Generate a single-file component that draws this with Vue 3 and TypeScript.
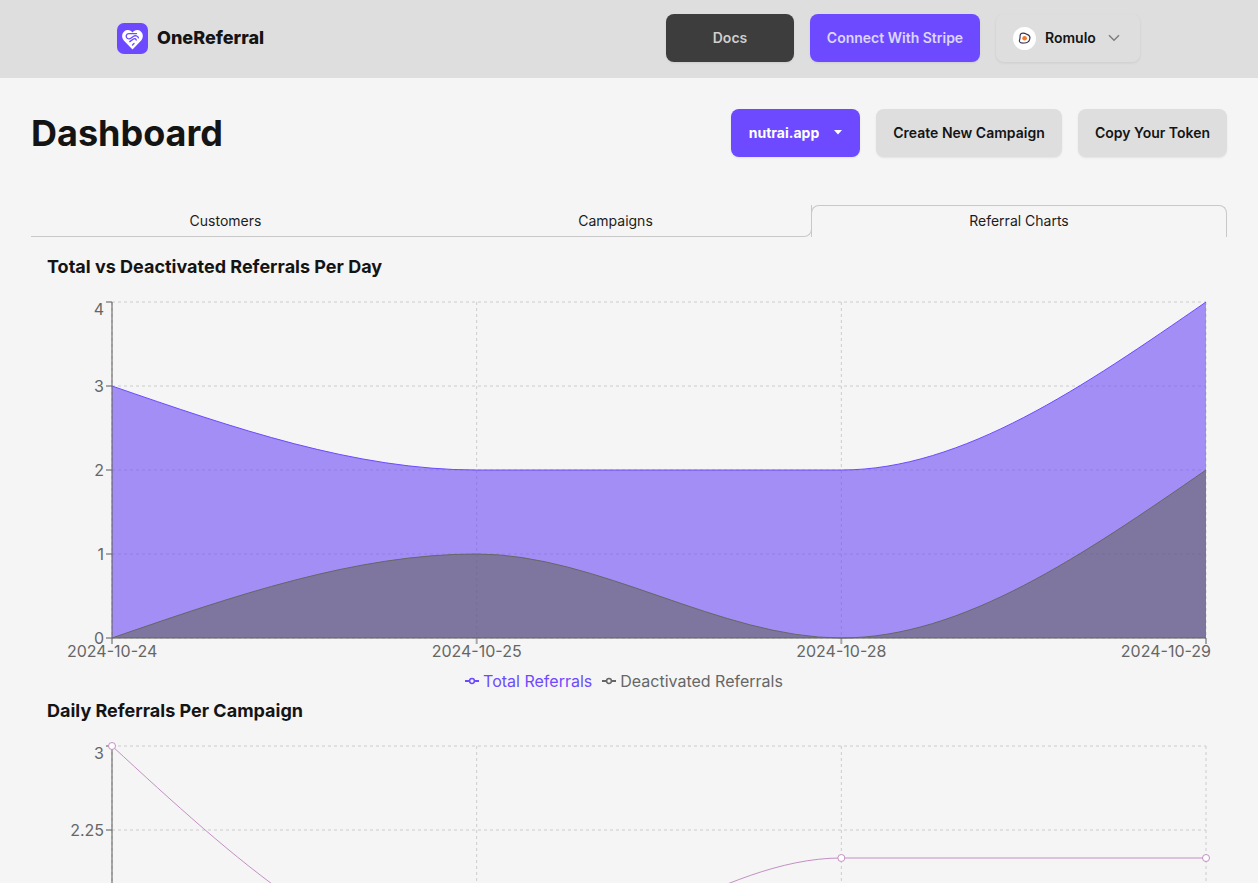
<script setup lang="ts">
type Pt = [number, number]

const xs = [112, 476.67, 841.33, 1206]
const xLabels = ['2024-10-24', '2024-10-25', '2024-10-28', '2024-10-29']

function monotone(pts: Pt[]): string {
  const n = pts.length
  const sign = (v: number) => (v < 0 ? -1 : 1)
  const slopes: number[] = new Array(n).fill(0)
  for (let i = 1; i < n - 1; i++) {
    const h0 = pts[i][0] - pts[i - 1][0]
    const h1 = pts[i + 1][0] - pts[i][0]
    const s0 = (pts[i][1] - pts[i - 1][1]) / h0
    const s1 = (pts[i + 1][1] - pts[i][1]) / h1
    const p = (s0 * h1 + s1 * h0) / (h0 + h1)
    slopes[i] = (sign(s0) + sign(s1)) * Math.min(Math.abs(s0), Math.abs(s1), 0.5 * Math.abs(p)) || 0
  }
  const edge = (a: Pt, b: Pt, t: number) => (3 * (b[1] - a[1]) / (b[0] - a[0]) - t) / 2
  slopes[0] = edge(pts[0], pts[1], slopes[1])
  slopes[n - 1] = edge(pts[n - 2], pts[n - 1], slopes[n - 2])
  let d = `M${pts[0][0]},${pts[0][1]}`
  for (let i = 0; i < n - 1; i++) {
    const dx = (pts[i + 1][0] - pts[i][0]) / 3
    d += `C${pts[i][0] + dx},${pts[i][1] + dx * slopes[i]},${pts[i + 1][0] - dx},${pts[i + 1][1] - dx * slopes[i + 1]},${pts[i + 1][0]},${pts[i + 1][1]}`
  }
  return d
}

const top1 = 302
const unit1 = 84
const bottom1 = top1 + 4 * unit1
const y1 = (v: number) => top1 + (4 - v) * unit1
const points = (vals: number[], y: (v: number) => number): Pt[] => vals.map((v, i) => [xs[i], y(v)])

const totalLine = monotone(points([3, 2, 2, 4], y1))
const deactLine = monotone(points([0, 1, 0, 2], y1))
const closeArea = (d: string) => `${d}L${xs[3]},${bottom1}L${xs[0]},${bottom1}Z`
const ticks1 = [4, 3, 2, 1, 0].map((v) => ({ label: String(v), y: y1(v), ty: v === 4 ? y1(v) + 13 : y1(v) + 6 }))

const top2 = 746
const unit2 = 112
const y2 = (v: number) => top2 + (3 - v) * unit2
const bottom2 = y2(0)
const campaignPts = points([3, 1, 2, 2], y2)
const campaignLine = monotone(campaignPts)
const ticks2 = [3, 2.25, 1.5, 0.75, 0].map((v) => ({ label: String(v), y: y2(v), ty: v === 3 ? y2(v) + 12.5 : y2(v) + 6 }))
</script>

<template>
  <div class="page">
    <header class="navbar">
      <div class="brand">
        <svg class="logo" viewBox="0 0 31 31" width="31" height="31" aria-hidden="true">
          <rect width="31" height="31" rx="7" fill="#6d4aff" />
          <path d="M15.5 26.5 L6.8 17.4 C3.4 13.6 5.6 7.2 10.6 7 C12.8 6.9 14.4 8 15.5 9.6 C16.6 8 18.2 6.9 20.4 7 C25.4 7.2 27.6 13.6 24.2 17.4 Z" fill="#fff" />
          <path d="M19.5 10.6 H12 C9.4 10.6 8.2 13.6 10.2 15.2 C11.4 16.1 13 15.9 14.2 15 L16.6 13.2 C18 12.2 21 12.8 21.4 14.8 M12.8 18.6 L16.4 16 C17.6 15.2 19 15.8 19.2 17 M15.5 22 L17 20.6" fill="none" stroke="#6d4aff" stroke-width="1.4" stroke-linecap="round" />
        </svg>
        <span class="brand-name">OneReferral</span>
      </div>
      <nav class="nav-actions">
        <button class="btn btn-dark" type="button">Docs</button>
        <button class="btn btn-stripe" type="button">Connect With Stripe</button>
        <button class="user" type="button">
          <span class="avatar">
            <svg viewBox="0 0 23 23" width="23" height="23" aria-hidden="true">
              <path d="M8.2 6.6 C10.4 5.2 12.6 6.6 14.2 7.4 C16.4 8.4 17.4 10.4 16.6 12.6 C15.8 15 13.6 16 11.4 16 C9.6 16 7.6 16.4 6.6 14.8 C5.8 13.4 7.2 12.2 7 10.6 C6.9 9.2 7 7.4 8.2 6.6 Z" fill="#fff" stroke="#3b3350" stroke-width="1.2" />
              <circle cx="11.6" cy="11.2" r="2.3" fill="#f0792b" />
            </svg>
          </span>
          <span class="user-name">Romulo</span>
          <svg class="chev" viewBox="0 0 12 8" width="12" height="8" aria-hidden="true">
            <path d="M1 1.2 L6 6.2 L11 1.2" fill="none" stroke="#7d7d7d" stroke-width="1.5" />
          </svg>
        </button>
      </nav>
    </header>

    <main class="content">
      <div class="title-row">
        <h1>Dashboard</h1>
        <div class="title-actions">
          <button class="btn btn-site" type="button">
            nutrai.app
            <svg viewBox="0 0 8 5" width="8" height="5" aria-hidden="true"><path d="M0 0 H8 L4 4.5 Z" fill="#fff" /></svg>
          </button>
          <button class="btn btn-light btn-create" type="button">Create New Campaign</button>
          <button class="btn btn-light btn-copy" type="button">Copy Your Token</button>
        </div>
      </div>

      <div class="tabs">
        <a class="tab">Customers</a>
        <a class="tab tab-before">Campaigns</a>
        <a class="tab tab-active">Referral Charts</a>
      </div>
    </main>

    <section class="chart">
      <h2 class="chart-title first">Total vs Deactivated Referrals Per Day</h2>
      <svg class="plot" viewBox="30 291 1188 374" width="1188" height="374">
        <g class="grid">
          <line v-for="t in ticks1" :key="t.label" :x1="xs[0]" :x2="xs[3]" :y1="t.y" :y2="t.y" />
          <line v-for="x in xs" :key="x" :x1="x" :x2="x" :y1="top1" :y2="bottom1" />
        </g>
        <path :d="closeArea(totalLine)" fill="#6d4af6" fill-opacity="0.6" />
        <path :d="totalLine" fill="none" stroke="#6d4aff" />
        <path :d="closeArea(deactLine)" fill="#666" fill-opacity="0.6" />
        <path :d="deactLine" fill="none" stroke="#666" />
        <g class="axis">
          <line :x1="xs[0]" :x2="xs[0]" :y1="top1" :y2="bottom1" />
          <line :x1="xs[0]" :x2="xs[3]" :y1="bottom1" :y2="bottom1" />
          <line v-for="t in ticks1" :key="t.label" :x1="xs[0] - 6" :x2="xs[0]" :y1="t.y" :y2="t.y" />
          <line v-for="x in xs" :key="x" :x1="x" :x2="x" :y1="bottom1" :y2="bottom1 + 6" />
        </g>
        <g class="labels">
          <text v-for="t in ticks1" :key="t.label" :x="xs[0] - 8" :y="t.ty" text-anchor="end">{{ t.label }}</text>
          <text :x="67" :y="bottom1 + 19">{{ xLabels[0] }}</text>
          <text :x="xs[1]" :y="bottom1 + 19" text-anchor="middle">{{ xLabels[1] }}</text>
          <text :x="xs[2]" :y="bottom1 + 19" text-anchor="middle">{{ xLabels[2] }}</text>
          <text :x="1211" :y="bottom1 + 19" text-anchor="end">{{ xLabels[3] }}</text>
        </g>
      </svg>
      <ul class="legend">
        <li class="legend-total">
          <svg viewBox="0 0 14 8" width="14" height="8" aria-hidden="true"><line x1="0" x2="14" y1="4" y2="4" stroke="currentColor" stroke-width="2" /><circle cx="7" cy="4" r="2.4" fill="#f5f5f5" stroke="currentColor" stroke-width="1.5" /></svg>
          Total Referrals
        </li>
        <li class="legend-deact">
          <svg viewBox="0 0 14 8" width="14" height="8" aria-hidden="true"><line x1="0" x2="14" y1="4" y2="4" stroke="currentColor" stroke-width="2" /><circle cx="7" cy="4" r="2.4" fill="#f5f5f5" stroke="currentColor" stroke-width="1.5" /></svg>
          Deactivated Referrals
        </li>
      </ul>

      <h2 class="chart-title second">Daily Referrals Per Campaign</h2>
      <svg class="plot" viewBox="30 735 1188 374" width="1188" height="374">
        <g class="grid">
          <line v-for="t in ticks2" :key="t.label" :x1="xs[0]" :x2="xs[3]" :y1="t.y" :y2="t.y" />
          <line v-for="x in xs" :key="x" :x1="x" :x2="x" :y1="top2" :y2="bottom2" />
        </g>
        <g class="axis">
          <line :x1="xs[0]" :x2="xs[0]" :y1="top2" :y2="bottom2" />
          <line :x1="xs[0]" :x2="xs[3]" :y1="bottom2" :y2="bottom2" />
          <line v-for="t in ticks2" :key="t.label" :x1="xs[0] - 6" :x2="xs[0]" :y1="t.y" :y2="t.y" />
        </g>
        <path :d="campaignLine" fill="none" stroke="#c48fc4" />
        <circle v-for="p in campaignPts" :key="p[0]" :cx="p[0]" :cy="p[1]" r="3.5" fill="#fff" stroke="#c48fc4" />
        <g class="labels">
          <text v-for="t in ticks2" :key="t.label" :x="xs[0] - 8" :y="t.ty" text-anchor="end">{{ t.label }}</text>
        </g>
      </svg>
    </section>
  </div>
</template>

<style>
html,
body {
  margin: 0;
  overflow: hidden;
  background: #f5f5f5;
}
</style>

<style scoped>
.page {
  height: 100vh;
  overflow: hidden;
  background: #f5f5f5;
  color: #141414;
  font-family: Inter, "Liberation Sans", sans-serif;
}

.navbar {
  height: 78px;
  box-sizing: border-box;
  padding: 0 118px 2px 117px;
  background: #dedede;
  display: flex;
  align-items: center;
  justify-content: space-between;
}

.brand {
  display: flex;
  align-items: center;
  gap: 9px;
}

.logo {
  display: block;
}

.brand-name {
  padding-bottom: 2px;
  font-size: 18px;
  font-weight: 800;
  color: #141414;
}

.nav-actions,
.title-actions {
  display: flex;
  align-items: center;
  gap: 16px;
}

.btn {
  height: 48px;
  box-sizing: border-box;
  padding: 0 0 1px;
  border: none;
  border-radius: 8px;
  font-family: inherit;
  font-size: 14px;
  font-weight: 600;
  display: flex;
  align-items: center;
  justify-content: center;
  box-shadow: 0 1px 2px rgba(0, 0, 0, 0.08);
}

.btn-dark {
  width: 128px;
  background: #3d3d3d;
  color: #cfcfcf;
}

.btn-stripe {
  width: 170px;
  background: #6d4aff;
  color: #dcd6ff;
}

.user {
  width: 144px;
  height: 48px;
  box-sizing: border-box;
  padding: 0 17px;
  border: none;
  border-radius: 8px;
  background: #dedede;
  box-shadow: 0 1px 3px rgba(0, 0, 0, 0.08);
  display: flex;
  align-items: center;
  font-family: inherit;
  font-size: 14px;
  font-weight: 600;
  color: #141414;
}

.avatar {
  width: 23px;
  height: 23px;
  border-radius: 50%;
  background: #fff;
  display: block;
  overflow: hidden;
}

.avatar svg {
  display: block;
}

.user-name {
  margin-left: 9px;
  padding-bottom: 2px;
}

.chev {
  margin-left: 12px;
}

.content {
  padding: 31px 31px 0;
}

.title-row {
  display: flex;
  align-items: center;
  justify-content: space-between;
  height: 48px;
}

h1 {
  margin: 0;
  font-size: 36px;
  font-weight: 700;
  color: #141414;
}

.btn-site {
  width: 129px;
  background: #6d4aff;
  color: #fff;
  font-weight: 700;
  gap: 15px;
}

.btn-light {
  background: #dedede;
  color: #141414;
}

.btn-create {
  width: 186px;
}

.btn-copy {
  width: 149px;
}

.tabs {
  margin-top: 48px;
  height: 32px;
  display: grid;
  grid-template-columns: 389px 392px 1fr;
}

.tab {
  display: flex;
  align-items: center;
  justify-content: center;
  box-sizing: border-box;
  font-size: 14px;
  color: #1c1c1c;
  border-bottom: 1px solid #c8c8c8;
}

.tab-before {
  border-right: 1px solid #c8c8c8;
  border-bottom-right-radius: 8px;
}

.tab-active {
  margin-left: -1px;
  padding-bottom: 2px;
  border: 1px solid #c8c8c8;
  border-bottom: none;
  border-radius: 8px 8px 0 0;
}

.chart {
  width: 1188px;
  margin-left: 30px;
}

.chart-title {
  margin: 0 0 0 17px;
  font-size: 18px;
  font-weight: 700;
  line-height: 22px;
  color: #141414;
}

.chart-title.first {
  padding-top: 19px;
  padding-bottom: 13px;
}

.chart-title.second {
  margin-top: 5px;
  padding-bottom: 13px;
}

.plot {
  display: block;
  overflow: visible;
}

.grid line {
  stroke: #ccc;
  stroke-dasharray: 3 3;
}

.axis line {
  stroke: #666;
  stroke-opacity: 0.55;
  stroke-width: 2;
}

.labels text {
  font-family: Inter, "Liberation Sans", sans-serif;
  font-size: 16px;
  fill: #666;
}

.legend {
  list-style: none;
  margin: 0;
  padding: 1px 0 0;
  height: 30px;
  box-sizing: border-box;
  display: flex;
  justify-content: center;
  gap: 10px;
  font-size: 16px;
  line-height: 24px;
}

.legend li {
  display: flex;
  align-items: center;
  gap: 4px;
}

.legend-total {
  color: #6d4aff;
}

.legend-deact {
  color: #666;
}
</style>
